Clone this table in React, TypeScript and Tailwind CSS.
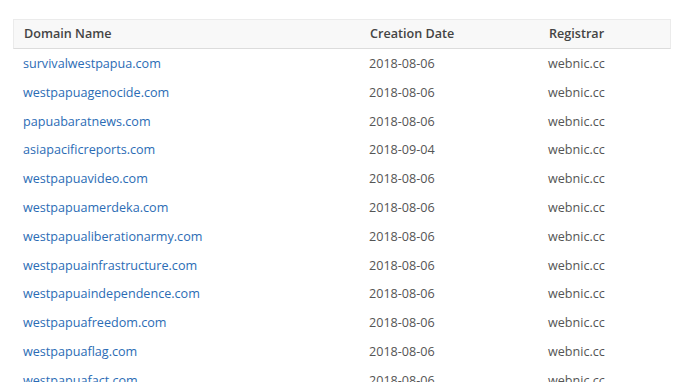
const rows = [
  ['survivalwestpapua.com', '2018-08-06'],
  ['westpapuagenocide.com', '2018-08-06'],
  ['papuabaratnews.com', '2018-08-06'],
  ['asiapacificreports.com', '2018-09-04'],
  ['westpapuavideo.com', '2018-08-06'],
  ['westpapuamerdeka.com', '2018-08-06'],
  ['westpapualiberationarmy.com', '2018-08-06'],
  ['westpapuainfrastructure.com', '2018-08-06'],
  ['westpapuaindependence.com', '2018-08-06'],
  ['westpapuafreedom.com', '2018-08-06'],
  ['westpapuaflag.com', '2018-08-06'],
  ['westpapuafact.com', '2018-08-06'],
]

export default function App() {
  return (
    <div className="w-[680px] h-[382px] overflow-hidden bg-white font-['Open_Sans',sans-serif] text-[12.6px]">
      <div className="pt-[19px] pl-[13px] pr-[9px]">
        {/* Header */}
        <div className="flex items-center h-[30px] bg-[#f8f8f8] border border-[#ebebeb] border-b-[#dcdcdc] text-[#444] font-semibold">
          <div className="w-[346px] pl-[10px]">Domain Name</div>
          <div className="w-[179px] pl-[10px]">Creation Date</div>
          <div className="flex-1 pl-[10px]">Registrar</div>
        </div>

        {/* Rows */}
        <div className="pt-[1px]">
          {rows.map(([domain, date]) => (
            <div key={domain} className="flex items-center h-[28.8px]">
              <div className="w-[346px] pl-[10px] text-[#2b6cb5]">{domain}</div>
              <div className="w-[179px] pl-[10px] text-[#555]">{date}</div>
              <div className="flex-1 pl-[10px] text-[#555]">webnic.cc</div>
            </div>
          ))}
        </div>
      </div>
    </div>
  )
}
